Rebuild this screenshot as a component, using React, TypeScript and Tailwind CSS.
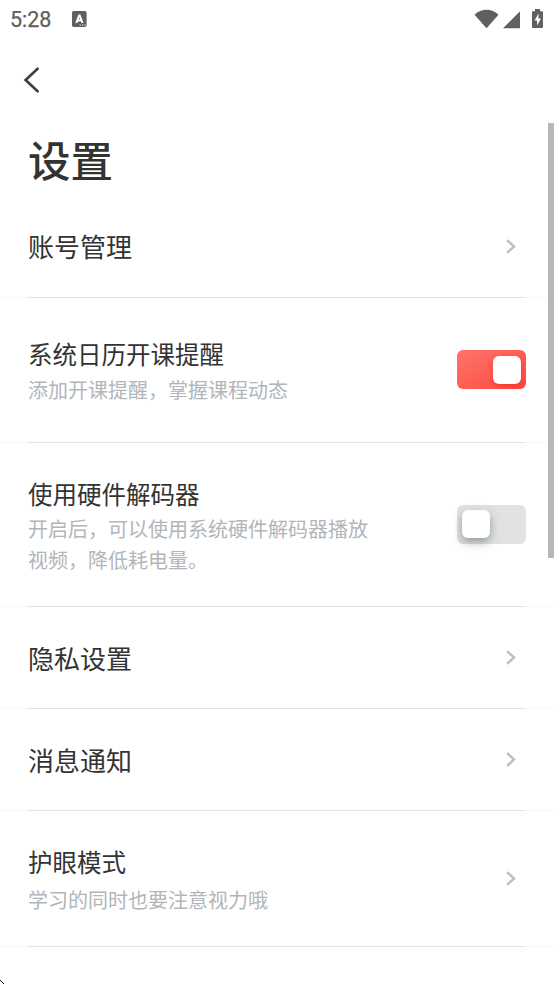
import React from "react";

function Chevron() {
  return (
    <svg width="12" height="16" viewBox="0 0 12 16" fill="none" className="mr-[9px] shrink-0">
      <path d="M2.2 1.2 9 7.5 2.2 13.8" stroke="#bcbdbf" strokeWidth="2.4" />
    </svg>
  );
}

function Toggle({ on = false }: { on?: boolean }) {
  return (
    <div
      className={
        "flex h-[39px] w-[69px] shrink-0 items-start rounded-[6px] " +
        (on
          ? "mb-px justify-end bg-linear-to-br from-[#ff736b] to-[#fd473e] pr-[5px] pt-[6px]"
          : "justify-start bg-[#e1e2e4] pl-[5px] pt-[5px]")
      }
    >
      <span
        className={
          "h-[28px] w-[28px] rounded-[6px] bg-white " +
          (on ? "shadow-[0_2px_5px_rgba(220,20,10,0.4)]" : "shadow-[0_4px_10px_rgba(70,85,80,0.5)]")
        }
      />
    </div>
  );
}

type RowProps = {
  title: string;
  height: string;
  sub?: React.ReactNode;
  subGap?: string;
  titlePad?: string;
  right: React.ReactNode;
};

function Row({ title, height, sub, subGap = "pt-px", titlePad = "pb-px", right }: RowProps) {
  return (
    <section className={"flex flex-col " + height}>
      <div className="flex grow items-center justify-between px-7">
        <div>
          <h2
            className={
              "font-normal text-[#333333] " +
              (sub ? "text-[24.5px] leading-[37px]" : "text-[26px] leading-[39px] " + titlePad)
            }
          >
            {title}
          </h2>
          {sub && <p className={"text-[20px] leading-[31px] text-[#b2b5b9] " + subGap}>{sub}</p>}
        </div>
        {right}
      </div>
      <div className="h-px bg-[#f7f7f7] px-7">
        <div className="h-px bg-[#e4e4e4]" />
      </div>
    </section>
  );
}

export default function App() {
  return (
    <div className="relative h-[984px] w-[554px] overflow-hidden bg-white font-['Noto_Sans_CJK_SC',sans-serif]">
      <header className="flex h-[38px] items-center justify-between pl-[10px] pr-[11px]">
        <div className="flex items-center">
          <span className="w-[62px] pt-px font-[Roboto,sans-serif] text-[21.5px] leading-[38px] text-[#606060] [-webkit-text-stroke:0.25px_#606060]">5:28</span>
          <svg width="15" height="16" viewBox="0 0 15 16">
            <rect width="14.6" height="16" rx="1.8" fill="#606060" />
            <path d="M4.2 12 7.1 4.6h.6L10.6 12M5.4 9.6h4" stroke="#fff" strokeWidth="2" fill="none" />
            <path d="M7.6 14h1.2M10 14h1.2M12.4 14h1.2" stroke="#fff" strokeWidth="1.1" />
          </svg>
        </div>
        <svg width="70" height="22" viewBox="0 0 70 22" fill="#606060">
          <path d="M1.500 6.800C8 .1 19 .1 25.500 6.800L13.500 20.300Z" />
          <path d="M47 3.300V20.300H30Z" />
          <path d="M59 4.200q0-1 1-1h2V1h5v2.200h2q1 0 1 1V19q0 1-1 1H60q-1 0-1-1Z" />
          <path d="m65.500 5.500-4 7h2.500v5l4-7h-2.500Z" fill="#fff" />
        </svg>
      </header>
      <nav className="flex h-[84px] items-center pl-[23px]">
        <svg width="18" height="28" viewBox="0 0 18 28" fill="none">
          <path d="M14.600 2.700 2.600 14l12 11.300" stroke="#38414f" strokeWidth="2.700" strokeLinecap="round" />
        </svg>
      </nav>
      <h1 className="h-[74px] pl-7 text-[42.5px] font-medium leading-[74px] text-[#333333]">设置</h1>
      <main>
        <Row title="账号管理" titlePad="pb-[3px]" height="h-[102px]" right={<Chevron />} />
        <Row title="系统日历开课提醒" sub="添加开课提醒，掌握课程动态" subGap="pt-[2px]" height="h-[145px]" right={<Toggle on />} />
        <Row
          title="使用硬件解码器"
          sub={<>开启后，可以使用系统硬件解码器播放<br />视频，降低耗电量。</>}
          height="h-[164px]"
          right={<Toggle />}
        />
        <Row title="隐私设置" height="h-[102px]" right={<Chevron />} />
        <Row title="消息通知" height="h-[102px]" right={<Chevron />} />
        <Row title="护眼模式" sub="学习的同时也要注意视力哦" subGap="pt-[4px]" height="h-[136px]" right={<Chevron />} />
      </main>
      <div className="absolute right-0 top-[123px] h-[435px] w-[6px] bg-[#b7b7b7]" />
      <svg className="absolute bottom-0 left-0" width="4" height="4" viewBox="0 0 4 4" shapeRendering="crispEdges">
        <path d="M0 0h1v1H0zM1 1h1v1H1zM2 2h1v1H2zM3 3h1v1H3z" fill="#111" />
      </svg>
    </div>
  );
}
